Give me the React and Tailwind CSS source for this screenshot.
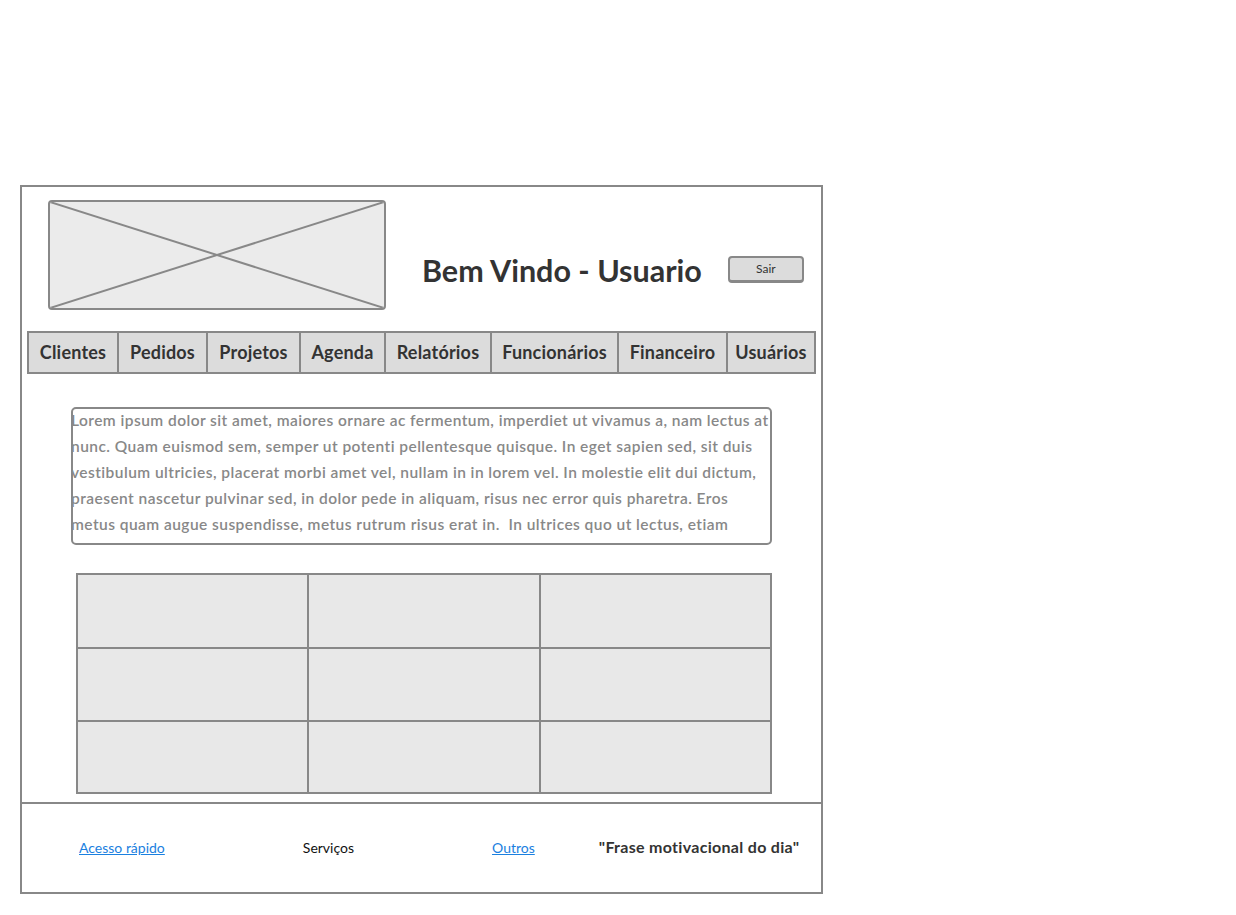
const menu = ['Clientes', 'Pedidos', 'Projetos', 'Agenda', 'Relatórios', 'Funcionários', 'Financeiro', 'Usuários']
const widths = ['w-[88px]', 'w-[89px]', 'w-[93px]', 'w-[85px]', 'w-[106px]', 'w-[127px]', 'w-[109px]', 'w-[92px]']

// wrapped the way the wireframe wraps it
const loremLines = [
  'Lorem ipsum dolor sit amet, maiores ornare ac fermentum, imperdiet ut vivamus a, nam lectus at',
  'nunc. Quam euismod sem, semper ut potenti pellentesque quisque. In eget sapien sed, sit duis',
  'vestibulum ultricies, placerat morbi amet vel, nullam in in lorem vel. In molestie elit dui dictum,',
  'praesent nascetur pulvinar sed, in dolor pede in aliquam, risus nec error quis pharetra. Eros',
  'metus quam augue suspendisse, metus rutrum risus erat in.  In ultrices quo ut lectus, etiam',
]

function ImagePlaceholder() {
  return (
    <div className="relative w-[338px] h-[110px] rounded-[4px] border-2 border-[#888] bg-[#ebebeb] overflow-hidden">
      <svg className="absolute inset-0 w-full h-full" viewBox="0 0 334 106" preserveAspectRatio="none">
        <line x1="0" y1="0" x2="334" y2="106" stroke="#888" strokeWidth="2" />
        <line x1="334" y1="0" x2="0" y2="106" stroke="#888" strokeWidth="2" />
      </svg>
    </div>
  )
}

export default function App() {
  return (
    <div className="w-[1236px] h-[915px] bg-white pt-[185px] pl-[20px]" style={{ fontFamily: 'Lato, "Liberation Sans", sans-serif' }}>
      <div className="w-[803px] h-[709px] border-2 border-[#888] flex flex-col">
        {/* Header */}
        <div className="flex items-start pl-[26px] pt-[13px]">
          <ImagePlaceholder />
          <h1 className="ml-[36px] mt-[50px] text-[30.5px] leading-[40px] font-bold text-[#333] whitespace-nowrap">
            Bem Vindo - Usuario
          </h1>
          <button className="ml-[26px] mt-[56px] w-[76px] h-[27px] rounded-[4px] border-2 border-b-[3px] border-[#888] bg-[#dcdcdc] text-[12px] text-[#333] leading-none">
            Sair
          </button>
        </div>

        {/* Menu */}
        <div className="flex ml-[5px] mt-[21px] h-[43px] w-[789px] border-2 border-[#888] bg-[#dcdcdc]">
          {menu.map((m, i) => (
            <div
              key={m}
              className={`${widths[i]} flex items-center justify-center text-[18px] tracking-[0.2px] font-bold text-[#333] whitespace-nowrap ${i > 0 ? 'border-l-2 border-[#888]' : ''} ${i === 7 ? 'flex-1' : ''}`}
            >
              {m}
            </div>
          ))}
        </div>

        {/* Text box */}
        <div className="ml-[49px] mt-[33px] w-[701px] h-[138px] rounded-[5px] border-2 border-[#888] overflow-hidden">
          <div className="text-[15.5px] tracking-[0.45px] leading-[26px] font-semibold text-[#888] -mt-[2px] -ml-[2px] whitespace-pre">
            {loremLines.map((l) => (
              <div key={l}>{l}</div>
            ))}
          </div>
        </div>

        {/* Grid */}
        <div className="ml-[54px] mt-[28px] w-[696px] h-[221px] border-2 border-[#888] bg-[#e8e8e8] grid grid-cols-[231px_232px_1fr] grid-rows-[74px_73px_1fr]">
          {Array.from({ length: 9 }).map((_, i) => (
            <div
              key={i}
              className={`${i % 3 !== 2 ? 'border-r-2' : ''} ${i < 6 ? 'border-b-2' : ''} border-[#888]`}
            />
          ))}
        </div>

        {/* Footer */}
        <div className="mt-[8px] border-t-2 border-[#888] flex-1 flex items-center text-[14px] pb-[2px]">
          <a href="#" className="ml-[57px] text-[#1a80e0] underline">Acesso rápido</a>
          <span className="ml-[138px] text-[#111]">Serviços</span>
          <a href="#" className="ml-[138px] text-[#1a80e0] underline">Outros</a>
          <span className="ml-[64px] text-[16px] tracking-[0.3px] font-bold text-[#333]">"Frase motivacional do dia"</span>
        </div>
      </div>
    </div>
  )
}
